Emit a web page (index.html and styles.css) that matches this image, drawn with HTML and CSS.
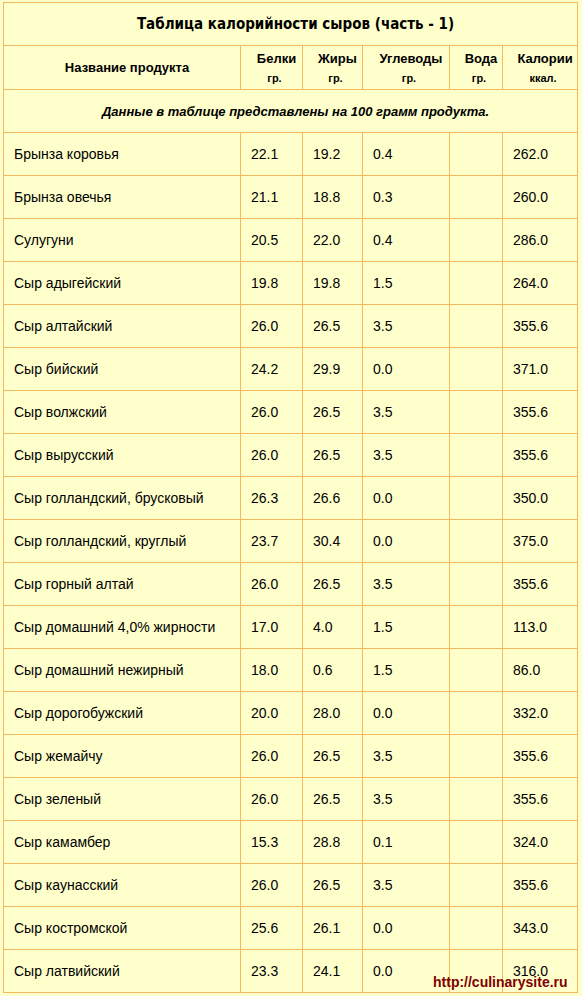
FILE: index.html
```html
<!DOCTYPE html>
<html lang="ru">
<head>
<meta charset="utf-8">
<title>Таблица калорийности сыров</title>
<link rel="stylesheet" href="styles.css">
</head>
<body>
<div class="wrap">
<table class="cal">
  <colgroup>
    <col class="c-name"><col class="c-b"><col class="c-j"><col class="c-u"><col class="c-v"><col class="c-k">
  </colgroup>
  <tr class="r-title"><td colspan="6" class="title">Таблица калорийности сыров (часть - 1)</td></tr>
  <tr class="r-head">
    <td class="head">Название продукта</td>
    <td class="head"><div class="h-t">Белки</div><div class="h-u">гр.</div></td>
    <td class="head"><div class="h-t">Жиры</div><div class="h-u">гр.</div></td>
    <td class="head"><div class="h-t">Углеводы</div><div class="h-u">гр.</div></td>
    <td class="head"><div class="h-t">Вода</div><div class="h-u">гр.</div></td>
    <td class="head"><div class="h-t">Калории</div><div class="h-u">ккал.</div></td>
  </tr>
  <tr class="r-note"><td colspan="6" class="note">Данные в таблице представлены на 100 грамм продукта.</td></tr>
  <tr><td>Брынза коровья</td><td>22.1</td><td>19.2</td><td>0.4</td><td></td><td>262.0</td></tr>
  <tr><td>Брынза овечья</td><td>21.1</td><td>18.8</td><td>0.3</td><td></td><td>260.0</td></tr>
  <tr><td>Сулугуни</td><td>20.5</td><td>22.0</td><td>0.4</td><td></td><td>286.0</td></tr>
  <tr><td>Сыр адыгейский</td><td>19.8</td><td>19.8</td><td>1.5</td><td></td><td>264.0</td></tr>
  <tr><td>Сыр алтайский</td><td>26.0</td><td>26.5</td><td>3.5</td><td></td><td>355.6</td></tr>
  <tr><td>Сыр бийский</td><td>24.2</td><td>29.9</td><td>0.0</td><td></td><td>371.0</td></tr>
  <tr><td>Сыр волжский</td><td>26.0</td><td>26.5</td><td>3.5</td><td></td><td>355.6</td></tr>
  <tr><td>Сыр вырусский</td><td>26.0</td><td>26.5</td><td>3.5</td><td></td><td>355.6</td></tr>
  <tr><td>Сыр голландский, брусковый</td><td>26.3</td><td>26.6</td><td>0.0</td><td></td><td>350.0</td></tr>
  <tr><td>Сыр голландский, круглый</td><td>23.7</td><td>30.4</td><td>0.0</td><td></td><td>375.0</td></tr>
  <tr><td>Сыр горный алтай</td><td>26.0</td><td>26.5</td><td>3.5</td><td></td><td>355.6</td></tr>
  <tr><td>Сыр домашний 4,0% жирности</td><td>17.0</td><td>4.0</td><td>1.5</td><td></td><td>113.0</td></tr>
  <tr><td>Сыр домашний нежирный</td><td>18.0</td><td>0.6</td><td>1.5</td><td></td><td>86.0</td></tr>
  <tr><td>Сыр дорогобужский</td><td>20.0</td><td>28.0</td><td>0.0</td><td></td><td>332.0</td></tr>
  <tr><td>Сыр жемайчу</td><td>26.0</td><td>26.5</td><td>3.5</td><td></td><td>355.6</td></tr>
  <tr><td>Сыр зеленый</td><td>26.0</td><td>26.5</td><td>3.5</td><td></td><td>355.6</td></tr>
  <tr><td>Сыр камамбер</td><td>15.3</td><td>28.8</td><td>0.1</td><td></td><td>324.0</td></tr>
  <tr><td>Сыр каунасский</td><td>26.0</td><td>26.5</td><td>3.5</td><td></td><td>355.6</td></tr>
  <tr><td>Сыр костромской</td><td>25.6</td><td>26.1</td><td>0.0</td><td></td><td>343.0</td></tr>
  <tr><td>Сыр латвийский</td><td>23.3</td><td>24.1</td><td>0.0</td><td></td><td>316.0</td></tr>
</table>
<div class="mark">http://culinarysite.ru</div>
</div>
</body>
</html>
```
FILE: styles.css
```css
html, body {
  margin: 0;
  padding: 0;
  background: #ffffcc;
}
.wrap {
  position: relative;
  padding: 2px 0 0 3px;
  width: 575px;
}
.cal {
  border-collapse: collapse;
  table-layout: fixed;
  width: 575px;
  background: #ffffcc;
  font-family: "Liberation Sans", Arial, sans-serif;
  font-size: 14px;
  color: #000;
}
.c-name { width: 237px; }
.c-b { width: 62px; }
.c-j { width: 60px; }
.c-u { width: 87px; }
.c-v { width: 53px; }
.c-k { width: 75px; }
.cal td {
  border: 1px solid #f4b85e;
  padding: 0 0 0 10px;
  box-sizing: border-box;
  vertical-align: middle;
  text-align: left;
}
.cal tr td { height: 43px; }
.cal .r-title td { height: 43px; }
.cal .r-head td { height: 44px; }
.title {
  text-align: center !important;
  font-family: "DejaVu Sans Condensed", "DejaVu Sans", sans-serif;
  font-weight: bold;
  font-size: 15px;
}
.head {
  text-align: center !important;
  font-weight: bold;
  font-size: 13px;
}
.h-t {
  line-height: 16px;
}
.h-u {
  font-size: 11px;
  line-height: 12px;
  margin-top: 5px;
  padding-right: 4px;
}
.note {
  text-align: center !important;
  font-weight: bold;
  font-style: italic;
  font-size: 13px;
}
.mark {
  position: absolute;
  left: 433px;
  top: 974px;
  font-family: "Liberation Sans", Arial, sans-serif;
  font-weight: bold;
  font-size: 14px;
  color: #800000;
  white-space: nowrap;
}
```
